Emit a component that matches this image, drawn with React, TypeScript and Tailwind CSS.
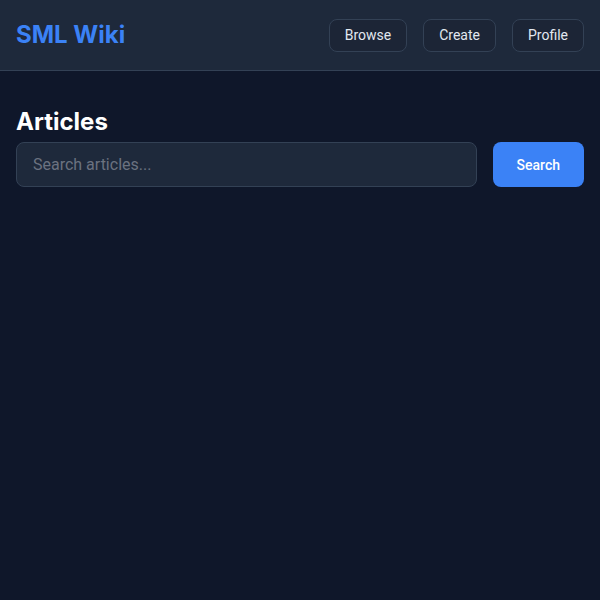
import { useState } from "react";

const NAV = ["Browse", "Create", "Profile"];

export default function App() {
  const [query, setQuery] = useState("");

  return (
    <div className="min-h-screen bg-[#0f172a] text-slate-100 font-['Roboto',sans-serif]">
      {/* Header */}
      <header className="flex items-center justify-between px-4 h-[70px] bg-[#1e293b] border-b border-[#334155] box-content">
        <h1 className="text-2xl font-bold text-[#3b82f6] font-['Inter',sans-serif]">SML Wiki</h1>
        <nav className="flex gap-4">
          {NAV.map((n) => (
            <button
              key={n}
              className="h-[33px] px-[15px] text-sm text-slate-200 border border-[#334155] rounded-lg bg-[#1c2536]"
            >
              {n}
            </button>
          ))}
        </nav>
      </header>

      {/* Main */}
      <main className="px-4 pt-[35px]">
        <h2 className="text-2xl font-bold text-white font-['Inter',sans-serif] mb-1">Articles</h2>
        <div className="flex gap-4">
          <input
            value={query}
            onChange={(e) => setQuery(e.target.value)}
            placeholder="Search articles..."
            className="flex-1 h-[45px] px-4 text-base bg-[#1e293b] border border-[#334155] rounded-lg text-slate-100 placeholder-[#6b7280] outline-none"
          />
          <button className="h-[45px] px-6 text-sm font-medium text-white bg-[#3b82f6] rounded-lg">
            Search
          </button>
        </div>
      </main>
    </div>
  );
}
